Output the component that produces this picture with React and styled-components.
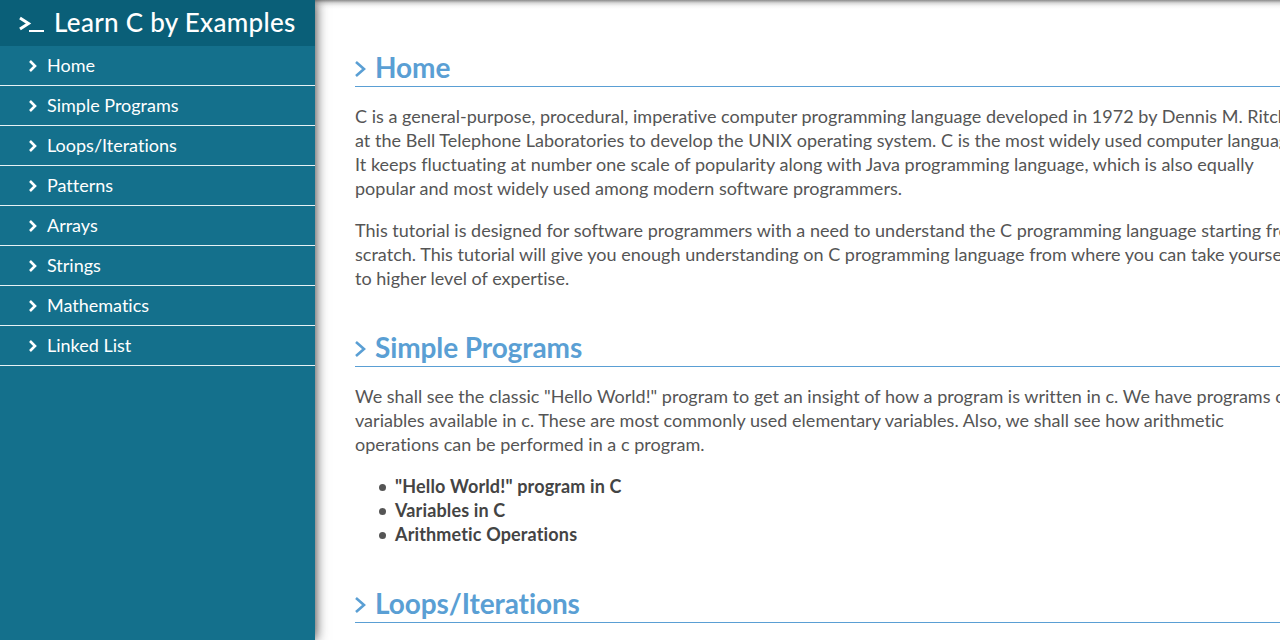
import React from 'react';
import styled, { createGlobalStyle } from 'styled-components';

const menu = ['Home', 'Simple Programs', 'Loops/Iterations', 'Patterns', 'Arrays', 'Strings', 'Mathematics', 'Linked List'];

const Chevron = ({ width = 8, height = 12, weight = 2.6 }) => (
  <svg width={width} height={height} viewBox={`0 0 ${width} ${height}`} fill="none">
    <path d={`M1 1 L${width - 2} ${height / 2} L1 ${height - 1}`} stroke="currentColor" strokeWidth={weight} />
  </svg>
);

const HeadingChevron = () => <Chevron width={11} height={16} weight={2.6} />;

function App() {
  return (
    <>
      <GlobalStyle />
      <Page>
        <Sidebar>
          <Brand>
            <Prompt width="25" height="16" viewBox="0 0 25 16" fill="none">
              <path d="M1 2 L9.5 7.5 L1 13" stroke="currentColor" strokeWidth="3" />
              <path d="M10 15 H25" stroke="currentColor" strokeWidth="2" />
            </Prompt>
            Learn C by Examples
          </Brand>
          <nav>
            {menu.map(item => (
              <MenuItem key={item}>
                <Chevron />
                {item}
              </MenuItem>
            ))}
          </nav>
        </Sidebar>
        <Main>
          <Section>
            <Heading><HeadingChevron />Home</Heading>
            <Para>
              C is a general-purpose, procedural, imperative computer programming language developed in 1972 by Dennis M. Ritchie<br />
              at the Bell Telephone Laboratories to develop the UNIX operating system. C is the most widely used computer language.<br />
              It keeps fluctuating at number one scale of popularity along with Java programming language, which is also equally<br />
              popular and most widely used among modern software programmers.
            </Para>
            <Para>
              This tutorial is designed for software programmers with a need to understand the C programming language starting from<br />
              scratch. This tutorial will give you enough understanding on C programming language from where you can take yourself<br />
              to higher level of expertise.
            </Para>
          </Section>
          <Section>
            <Heading><HeadingChevron />Simple Programs</Heading>
            <Para>
              We shall see the classic "Hello World!" program to get an insight of how a program is written in c. We have programs on<br />
              variables available in c. These are most commonly used elementary variables. Also, we shall see how arithmetic<br />
              operations can be performed in a c program.
            </Para>
            <TopicList>
              <Topic>"Hello World!" program in C</Topic>
              <Topic>Variables in C</Topic>
              <Topic>Arithmetic Operations</Topic>
            </TopicList>
          </Section>
          <Section>
            <Heading><HeadingChevron />Loops/Iterations</Heading>
          </Section>
        </Main>
      </Page>
    </>
  );
}

const GlobalStyle = createGlobalStyle`
  html, body {
    margin: 0;
    height: 100%;
    overflow: hidden;
    background: #fff;
    font-family: Lato, 'Open Sans', sans-serif;
    font-variant-ligatures: none;
  }
`;

const Page = styled.div`
  display: flex;
  width: 1280px;
  height: 640px;
  overflow: hidden;
  background: linear-gradient(#8c8c8c, #d8d8d8 3px, #f6f6f6 6px, #fff 9px);
`;

const Sidebar = styled.aside`
  flex: 0 0 315px;
  background: #14708c;
  color: #fff;
  box-shadow: 0 0 12px rgba(0, 0, 0, 0.85);
  position: relative;
`;

const Brand = styled.div`
  display: flex;
  align-items: center;
  height: 44px;
  padding: 0 0 2px 19px;
  gap: 10px;
  background: #0a5f78;
  font-size: 26px;
  font-weight: 500;
  letter-spacing: 0.3px;
`;

const Prompt = styled.svg`
  flex: none;
  margin-top: 3px;
`;

const MenuItem = styled.div`
  display: flex;
  align-items: center;
  height: 37px;
  padding: 0 0 2px 29px;
  gap: 10px;
  border-bottom: 1px solid #e6f2f5;
  font-size: 18px;

  svg {
    flex: none;
    margin-top: 2px;
  }
`;

const Main = styled.main`
  flex: none;
  width: 1000px;
  padding: 48px 0 0 40px;
`;

const Section = styled.section`
  margin-bottom: 38px;
`;

const Heading = styled.h2`
  display: flex;
  align-items: center;
  gap: 9px;
  margin: 0 0 17px;
  height: 38px;
  border-bottom: 1px solid #5a9fd4;
  color: #5a9fd4;
  font-size: 28px;
  font-weight: 700;
  line-height: 38px;
  letter-spacing: -0.1px;

  svg {
    margin-top: 3px;
  }
`;

const Para = styled.p`
  margin: 0 0 18px;
  color: #555;
  font-size: 18px;
  line-height: 24px;
  white-space: nowrap;
  letter-spacing: 0.02px;
`;

const TopicList = styled.ul`
  margin: 0;
  padding-left: 24px;
  list-style: none;
  color: #444;
  font-size: 18px;
  font-weight: 700;
  line-height: 24px;
  letter-spacing: 0.15px;
`;

const Topic = styled.li`
  display: flex;
  align-items: center;
  gap: 9px;

  &::before {
    content: '';
    flex: none;
    width: 7px;
    height: 7px;
    margin-top: 2px;
    border-radius: 50%;
    background: #555;
  }
`;

export default App;
